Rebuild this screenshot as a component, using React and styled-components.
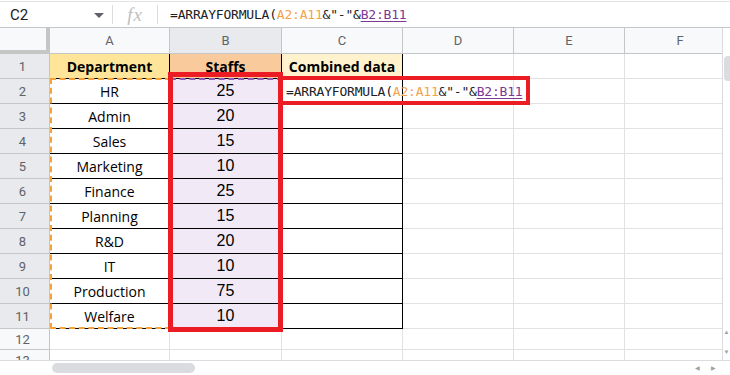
import React from 'react';
import styled, { createGlobalStyle } from 'styled-components';

const GlobalStyle = createGlobalStyle`
  html, body {
    margin: 0;
    padding: 0;
    background: #ffffff;
    overflow: hidden;
  }
  * {
    box-sizing: border-box;
  }
`;

const Page = styled.div`
  width: 730px;
  height: 375px;
  display: flex;
  flex-direction: column;
  background: #fff;
  font-family: Roboto, 'Liberation Sans', Arial, sans-serif;
  overflow: hidden;
`;

const FormulaBar = styled.div`
  height: 27px;
  margin-top: 1px;
  border-top: 1px solid #e3e3e3;
  border-bottom: 1px solid #c4c7c5;
  display: flex;
  align-items: center;
  flex-shrink: 0;
`;

const NameBox = styled.div`
  width: 112px;
  padding-left: 10px;
  padding-right: 8px;
  display: flex;
  align-items: center;
  justify-content: space-between;
  font-size: 15px;
  color: #202124;
`;

const Caret = styled.span`
  width: 0;
  height: 0;
  border-left: 5px solid transparent;
  border-right: 5px solid transparent;
  border-top: 5px solid #5f6368;
  margin-top: 2px;
`;

const Divider = styled.div`
  width: 1px;
  height: 19px;
  background: #dadce0;
`;

const FxIcon = styled.div`
  width: 44px;
  text-align: center;
  font-family: 'Liberation Serif', 'DejaVu Serif', serif;
  font-style: italic;
  font-size: 19px;
  color: #c0c0c0;
  letter-spacing: 1px;
`;

const FormulaText = styled.div`
  padding-left: 12px;
  font-family: 'DejaVu Sans Mono', 'Liberation Mono', monospace;
  font-size: 13px;
  letter-spacing: -0.2px;
  color: #202124;
  white-space: nowrap;
`;

const Ref = styled.span`
  color: ${(p) => p.$color};
  text-decoration: ${(p) => (p.$underline ? 'underline' : 'none')};
  text-underline-offset: 2px;
`;

const SheetArea = styled.div`
  flex: 1;
  display: flex;
  min-height: 0;
`;

const GridWrap = styled.div`
  position: relative;
  width: 722px;
  overflow: hidden;
`;

const Grid = styled.div`
  display: grid;
  grid-template-columns: 50px 120px 112px 121px 111px 111px 111px;
  grid-template-rows: 26px repeat(11, 25px) 21px 21px;
`;

const Corner = styled.div`
  background: #f8f9fa;
  border-right: 4px solid #c4c7c5;
  border-bottom: 4px solid #c4c7c5;
`;

const ColHead = styled.div`
  background: ${(p) => (p.$active ? '#e8eaed' : '#f8f9fa')};
  border-right: 1px solid #c4c7c5;
  border-bottom: 1px solid #c4c7c5;
  display: flex;
  align-items: center;
  justify-content: center;
  font-size: 13px;
  color: #5f6368;
`;

const RowHead = styled.div`
  background: ${(p) => (p.$active ? '#e8eaed' : '#f8f9fa')};
  border-right: 1px solid #c4c7c5;
  border-bottom: 1px solid #c4c7c5;
  display: flex;
  align-items: center;
  justify-content: center;
  padding-right: 4px;
  font-size: 13px;
  color: #5f6368;
  overflow: hidden;
`;

const Cell = styled.div`
  background: ${(p) => p.$bg || '#fff'};
  border-right: 1px solid ${(p) => (p.$table ? '#000' : '#e2e2e3')};
  border-bottom: 1px solid ${(p) => (p.$table ? '#000' : '#e2e2e3')};
  display: flex;
  align-items: center;
  justify-content: center;
  color: #000;
  font-family: ${(p) => (p.$num ? "'Liberation Sans', Arial, sans-serif" : "'Open Sans', 'Noto Sans', sans-serif")};
  font-size: ${(p) => (p.$num ? '16px' : '14px')};
  font-weight: ${(p) => (p.$bold ? 700 : 400)};
  white-space: nowrap;
  overflow: hidden;
`;

const SpillCell = styled(Cell)`
  justify-content: flex-start;
  overflow: visible;
  position: relative;
  z-index: 2;
  padding-left: 4px;
  font-family: 'DejaVu Sans Mono', 'Liberation Mono', monospace;
  font-size: 13px;
  letter-spacing: -0.2px;
  color: #202124;
`;

const RangeBox = styled.div`
  position: absolute;
  left: ${(p) => p.$x}px;
  top: ${(p) => p.$y}px;
  width: ${(p) => p.$w}px;
  height: ${(p) => p.$h}px;
  border: 2px dashed ${(p) => p.$color};
  pointer-events: none;
  z-index: 3;
`;

const RedBox = styled.div`
  position: absolute;
  left: ${(p) => p.$x}px;
  top: ${(p) => p.$y}px;
  width: ${(p) => p.$w}px;
  height: ${(p) => p.$h}px;
  border: ${(p) => p.$t}px solid #ec1c24;
  pointer-events: none;
  z-index: 4;
`;

const VScroll = styled.div`
  width: 8px;
  border-left: 1px solid #dadce0;
  display: flex;
  flex-direction: column;
  align-items: flex-end;
  padding-top: 28px;
`;

const VThumb = styled.div`
  width: 6px;
  height: 25px;
  border-radius: 4px 0 0 4px;
  background: #dadce0;
`;

const VArrows = styled.div`
  margin-top: auto;
  margin-bottom: 5px;
  display: flex;
  flex-direction: column;
  gap: 14px;
  align-items: center;
  width: 100%;
  font-size: 6px;
  color: #9aa0a6;
  line-height: 6px;
`;

const HScroll = styled.div`
  height: 15px;
  flex-shrink: 0;
  border-top: 1px solid #dadce0;
  display: flex;
  align-items: center;
  padding-left: 52px;
`;

const HThumb = styled.div`
  width: 143px;
  height: 10px;
  border-radius: 5px;
  background: #dadce0;
`;

const HArrows = styled.div`
  margin-left: auto;
  margin-right: 14px;
  display: flex;
  gap: 11px;
  font-size: 6px;
  line-height: 6px;
  color: #9aa0a6;
`;

const departments = [
  ['HR', 25],
  ['Admin', 20],
  ['Sales', 15],
  ['Marketing', 10],
  ['Finance', 25],
  ['Planning', 15],
  ['R&D', 20],
  ['IT', 10],
  ['Production', 75],
  ['Welfare', 10],
];

const cols = ['A', 'B', 'C', 'D', 'E', 'F'];

const Formula = () => (
  <>
    =ARRAYFORMULA(<Ref $color="#f4a24c">A2:A11</Ref>&amp;"-"&amp;
    <Ref $color="#7e3794" $underline>B2:B11</Ref>
  </>
);

const EmptyCells = ({ from }) =>
  cols.slice(from).map((c) => <Cell key={c} />);

export default function App() {
  return (
    <>
      <GlobalStyle />
      <Page>
        <FormulaBar>
          <NameBox>
            C2
            <Caret />
          </NameBox>
          <Divider />
          <FxIcon>fx</FxIcon>
          <Divider />
          <FormulaText>
            <Formula />
          </FormulaText>
        </FormulaBar>

        <SheetArea>
          <GridWrap>
            <Grid>
              <Corner />
              {cols.map((c) => (
                <ColHead key={c} $active={c === 'B'}>
                  {c}
                </ColHead>
              ))}

              <RowHead $active>1</RowHead>
              <Cell $table $bold $bg="#ffe599">Department</Cell>
              <Cell $table $bold $bg="#f9cb9c">Staffs</Cell>
              <Cell $table $bold $bg="#fff2cc">Combined data</Cell>
              <EmptyCells from={3} />

              {departments.map(([name, staff], i) => (
                <React.Fragment key={name}>
                  <RowHead $active>{i + 2}</RowHead>
                  <Cell $table>{name}</Cell>
                  <Cell $table $num $bg="#f1e9f6">
                    {staff}
                  </Cell>
                  {i === 0 ? (
                    <SpillCell $table>
                      <Formula />
                    </SpillCell>
                  ) : (
                    <Cell $table />
                  )}
                  <EmptyCells from={3} />
                </React.Fragment>
              ))}

              <RowHead>12</RowHead>
              <EmptyCells from={0} />
              <RowHead>13</RowHead>
              <EmptyCells from={0} />
            </Grid>

            <RangeBox $x={50} $y={50} $w={121} $h={251} $color="#f6a23a" />
            <RangeBox $x={170} $y={50} $w={113} $h={251} $color="#8e5bb8" />
            <RedBox $x={168} $y={44} $w={115} $h={260} $t={5} />
            <RedBox $x={278} $y={48} $w={252} $h={29} $t={4} />
          </GridWrap>
          <VScroll>
            <VThumb />
            <VArrows>
              <span>▲</span>
              <span>▼</span>
            </VArrows>
          </VScroll>
        </SheetArea>

        <HScroll>
          <HThumb />
          <HArrows>
            <span>◀</span>
            <span>▶</span>
          </HArrows>
        </HScroll>
      </Page>
    </>
  );
}
